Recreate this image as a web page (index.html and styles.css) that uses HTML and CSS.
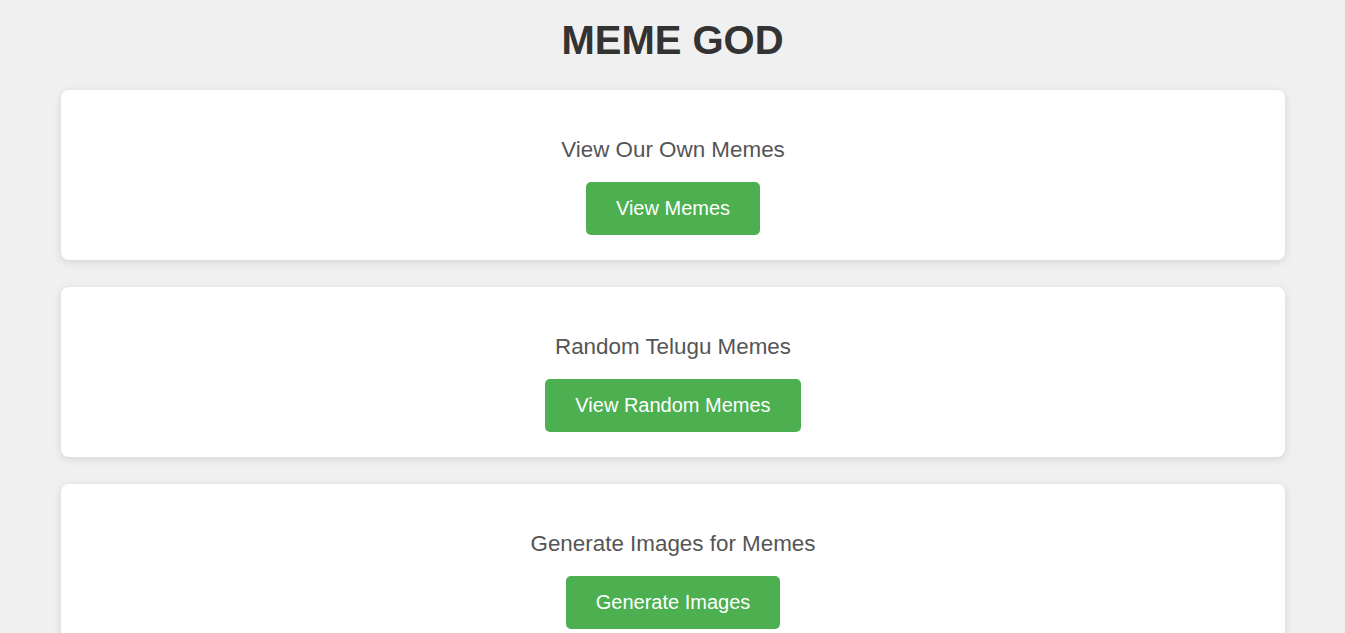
FILE: index.html
```html
<!DOCTYPE html>
<html lang="en">
<head>
<meta charset="utf-8">
<title>MEME GOD</title>
<link rel="stylesheet" href="styles.css">
</head>
<body>
<h1 class="title">MEME GOD</h1>
<main class="cards">
  <section class="card">
    <h2 class="card-title">View Our Own Memes</h2>
    <a class="btn" href="#">View Memes</a>
  </section>
  <section class="card">
    <h2 class="card-title">Random Telugu Memes</h2>
    <a class="btn" href="#">View Random Memes</a>
  </section>
  <section class="card">
    <h2 class="card-title">Generate Images for Memes</h2>
    <a class="btn" href="#">Generate Images</a>
  </section>
</main>
</body>
</html>
```
FILE: styles.css
```css
html, body {
  margin: 0;
  padding: 0;
}
body {
  background: #f0f0f0;
  font-family: "Liberation Sans", Arial, sans-serif;
  color: #333;
}
.title {
  margin: 0;
  padding: 17px 0 0;
  height: 46px;
  line-height: 46px;
  font-size: 40px;
  font-weight: bold;
  text-align: center;
  color: #333;
}
.cards {
  display: flex;
  flex-direction: column;
  gap: 27px;
  padding: 27px 60px 40px 61px;
}
.card {
  background: #fff;
  border-radius: 8px;
  box-shadow: 0 2px 8px rgba(0, 0, 0, 0.12);
  height: 170px;
  box-sizing: border-box;
  padding-top: 47px;
  display: flex;
  flex-direction: column;
  align-items: center;
}
.card-title {
  margin: 0 0 19px;
  font-size: 22.4px;
  font-weight: normal;
  line-height: 26px;
  color: #555;
}
.btn {
  display: inline-block;
  background: #4caf50;
  color: #fff;
  text-decoration: none;
  font-size: 20px;
  line-height: 23px;
  padding: 15px 30px;
  border-radius: 5px;
}
```
